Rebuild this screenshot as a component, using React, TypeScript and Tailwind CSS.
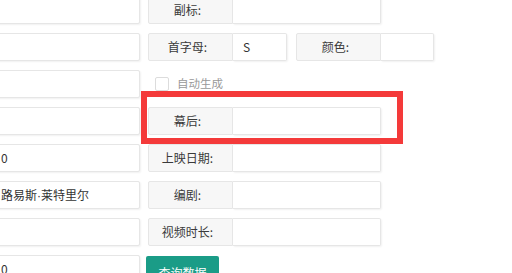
import React from "react";

const font = { fontFamily: '"Noto Sans CJK SC", "Liberation Sans", sans-serif' };

const Label: React.FC<{ text: string; w?: string }> = ({ text, w = "w-[85px]" }) => (
  <div
    className={`${w} h-full shrink-0 flex items-center justify-center bg-[#f7f7f7] border border-[#e6e6e6] rounded-l-[2px] text-[12px] text-[#3a3a3a] pr-[6px]`}
  >
    {text}
  </div>
);

const Field: React.FC<{ value?: string; w: string }> = ({ value, w }) => (
  <div
    className={`${w} h-full shrink-0 flex items-center px-[10px] bg-white border border-l-0 border-[#e6e6e6] rounded-r-[2px] shadow-[1px_1px_2px_rgba(0,0,0,0.06)] text-[12px] text-[#333]`}
  >
    {value}
  </div>
);

const LeftInput: React.FC<{ value?: React.ReactNode }> = ({ value }) => (
  <div className="w-[152px] ml-[-12px] h-full shrink-0 flex items-center pl-[12px] bg-white border border-[#e6e6e6] rounded-[2px] shadow-[1px_1px_2px_rgba(0,0,0,0.06)] text-[12px] text-[#333]">
    {value}
  </div>
);

const App: React.FC = () => {
  const rows: { left?: React.ReactNode; right: React.ReactNode }[] = [
    {
      right: (
        <>
          <Label text="副标:" />
          <Field w="w-[148px]" />
        </>
      ),
    },
    {
      right: (
        <>
          <Label text="首字母:" />
          <Field w="w-[54px]" value="S" />
          <div className="w-[9px] shrink-0" />
          <Label text="颜色:" />
          <Field w="w-[53px]" />
        </>
      ),
    },
    {
      right: (
        <div className="flex items-center gap-[8px] pl-[7px] h-full">
          <span className="w-[14px] h-[14px] border border-[#dcdcdc] rounded-[2px] bg-white" />
          <span className="text-[11.5px] text-[#999]">自动生成</span>
        </div>
      ),
    },
    {
      right: (
        <>
          <Label text="幕后:" />
          <Field w="w-[148px]" />
        </>
      ),
    },
    {
      left: "0",
      right: (
        <>
          <Label text="上映日期:" />
          <Field w="w-[148px]" />
        </>
      ),
    },
    {
      left: (
        <span>
          路易斯<span className="font-['Liberation_Sans']">·</span>莱特里尔
        </span>
      ),
      right: (
        <>
          <Label text="编剧:" />
          <Field w="w-[148px]" />
        </>
      ),
    },
    {
      right: (
        <>
          <Label text="视频时长:" />
          <Field w="w-[148px]" />
        </>
      ),
    },
    {
      left: "0",
      right: (
        <button className="ml-[-2px] w-[73px] h-[30px] mt-[1px] bg-[#1a9c87] text-white text-[12px] rounded-[2px] flex items-start justify-center pt-[8px]">
          查询数据
        </button>
      ),
    },
  ];

  return (
    <div className="w-[512px] h-[273px] overflow-hidden bg-white" style={font}>
      <div className="relative flex flex-col gap-[9px] mt-[-4px]">
        {rows.map((r, i) => (
          <div key={i} className="flex h-[28px] gap-[8px]">
            <LeftInput value={r.left} />
            <div className="flex h-full">{r.right}</div>
          </div>
        ))}
        {/* red highlight box */}
        <div className="absolute left-[141px] top-[95px] w-[262px] h-[53px] border-[6px] border-[#f43a3a] pointer-events-none" />
      </div>
    </div>
  );
};

export default App;
